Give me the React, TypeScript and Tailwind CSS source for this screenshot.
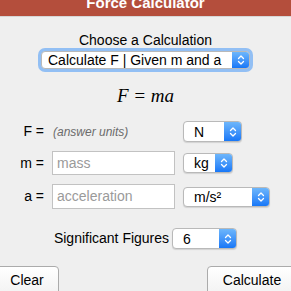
import React from 'react';

// 작은 macOS 스타일 셀렉트 (파란 화살표 영역 포함)
const Chevrons = () => (
  <svg width="8" height="12" viewBox="0 0 8 12" fill="none">
    <path d="M1.5 4.5 L4 2 L6.5 4.5" stroke="white" strokeWidth="1.3" strokeLinecap="round" strokeLinejoin="round" />
    <path d="M1.5 7.5 L4 10 L6.5 7.5" stroke="white" strokeWidth="1.3" strokeLinecap="round" strokeLinejoin="round" />
  </svg>
);

interface FakeSelectProps {
  value: string;
  className: string;
  textClass?: string;
  focused?: boolean;
}

const FakeSelect: React.FC<FakeSelectProps> = ({ value, className, textClass = 'pl-[10px]', focused }) => (
  <div
    className={
      'flex items-stretch rounded-[4px] bg-white border border-[#b9b9b9] overflow-hidden ' +
      (focused ? 'shadow-[0_0_0_3px_rgba(96,164,246,0.65)] ' : 'shadow-[0_1px_1px_rgba(0,0,0,0.12)] ') +
      className
    }
  >
    <span className={'flex-1 flex items-center text-[14px] text-black leading-none whitespace-nowrap ' + textClass}>
      {value}
    </span>
    <span className="w-[17px] flex items-center justify-center bg-gradient-to-b from-[#6db6fb] to-[#1677f7]">
      <Chevrons />
    </span>
  </div>
);

export default function App() {
  return (
    <div className="w-[291px] h-[291px] overflow-hidden bg-[#efefef] flex flex-col font-['Liberation_Sans',Arial,sans-serif] text-black">
      {/* 헤더 */}
      <div className="h-[17px] shrink-0 bg-[#b44e3c] border-b border-[#d6d6d6] overflow-hidden flex justify-center">
        <div className="mt-[-5px] text-[15px] leading-[15px] font-bold text-white">Force Calculator</div>
      </div>

      {/* 계산 선택 */}
      <div className="mt-[15px] text-center text-[14px] leading-[16px]">Choose a Calculation</div>
      <div className="mt-[3px] flex justify-center">
        <FakeSelect value="Calculate F | Given m and a" className="w-[209px] h-[18px]" textClass="pl-[6px]" focused />
      </div>

      {/* 공식 */}
      <div className="mt-[17px] text-center italic text-[19px] leading-[20px] font-['Liberation_Serif','Times_New_Roman',serif]">
        F = ma
      </div>

      {/* 입력 행 */}
      <div className="mt-[15px] grid grid-cols-[44px_123px_auto] gap-x-[8px] gap-y-[9px] items-center">
        <span className="text-right text-[14px]">F =</span>
        <span className="pl-[1px] text-[12px] italic text-[#6b6b6b]">(answer units)</span>
        <FakeSelect value="N" className="w-[59px] h-[21px]" />

        <span className="text-right text-[14px]">m =</span>
        <div className="h-[24px] bg-white border border-[#c2c2c2] flex items-center pl-[4px] text-[14px] text-[#9a9a9a]">mass</div>
        <FakeSelect value="kg" className="w-[50px] h-[20px]" />

        <span className="text-right text-[14px]">a =</span>
        <div className="h-[25px] bg-white border border-[#c2c2c2] flex items-center pl-[4px] text-[14px] text-[#9a9a9a]">acceleration</div>
        <FakeSelect value="m/s²" className="w-[87px] h-[20px]" />
      </div>

      {/* 유효숫자 */}
      <div className="mt-[19px] flex justify-center items-center gap-[3px]">
        <span className="text-[14px]">Significant Figures</span>
        <FakeSelect value="6" className="w-[65px] h-[21px]" />
      </div>

      {/* 버튼 */}
      <div className="mt-[17px] flex justify-between">
        <button className="ml-[-5px] w-[64px] h-[32px] shrink-0 rounded-[4px] border border-[#ababab] bg-gradient-to-b from-white to-[#f1f1f1] text-[14px] pb-[4px]">
          Clear
        </button>
        <button className="mr-[-6px] w-[90px] h-[32px] shrink-0 rounded-[4px] border border-[#ababab] bg-gradient-to-b from-white to-[#f1f1f1] text-[14px] pb-[4px]">
          Calculate
        </button>
      </div>
    </div>
  );
}
